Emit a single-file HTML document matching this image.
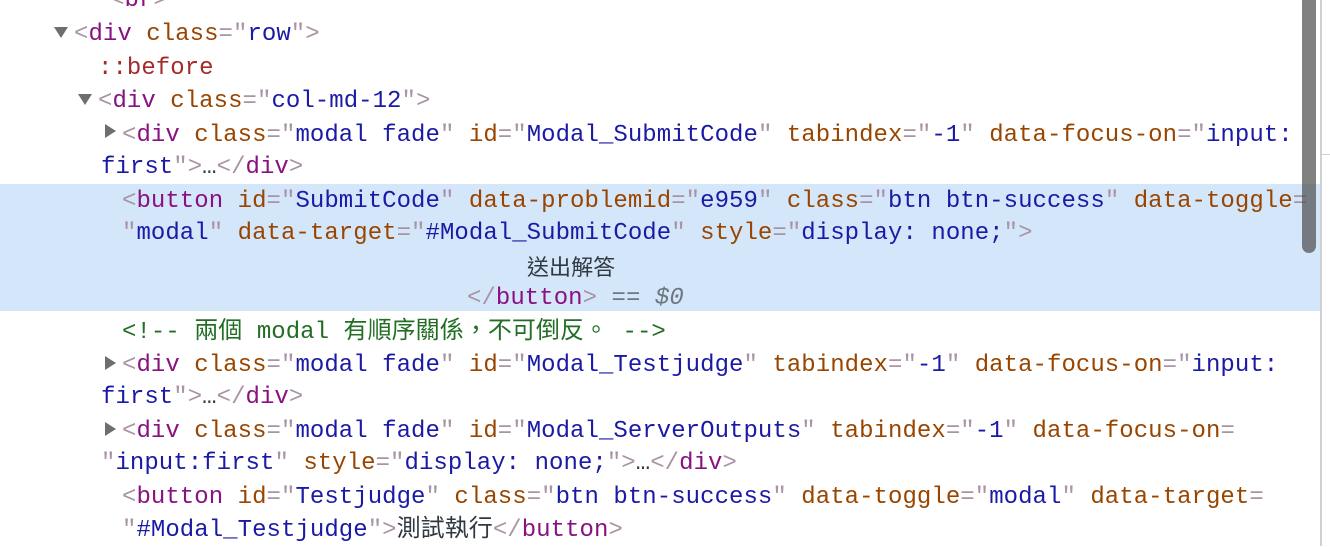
<!DOCTYPE html>
<html><head><meta charset="utf-8"><style>
body{margin:0;width:1330px;height:546px;overflow:hidden;background:#fff;position:relative;font-family:"Liberation Mono","Noto Sans CJK TC",monospace;font-size:24px;letter-spacing:0.05px}
.l{position:absolute;white-space:pre;height:33px;line-height:33px;margin-top:2px}
.t{color:#881280}.p{color:#a894a6}.a{color:#994500}.v{color:#1a1aa6}.c{color:#236e25}.x{color:#303942}.g{color:#6e7781}
.tri{position:absolute;width:0;height:0}
.down{border-left:7px solid transparent;border-right:7px solid transparent;border-top:11px solid #6e6e6e}
.right{border-top:7px solid transparent;border-bottom:7px solid transparent;border-left:11px solid #6e6e6e}
</style></head><body>
<div style="position:absolute;left:0;top:184px;width:1320px;height:127px;background:#d4e6f9"></div>
<div class="l" style="left:110px;top:-18px"><span class="p">&lt;</span><span class="t">br</span><span class="p">&gt;</span></div>
<div class="tri down" style="left:54px;top:27px"></div>
<div class="l" style="left:74px;top:16px"><span class="p">&lt;</span><span class="t">div</span> <span class="a">class</span><span class="p">="</span><span class="v">row</span><span class="p">"&gt;</span></div>
<div class="l" style="left:98px;top:50px;color:#a52a2a">::before</div>
<div class="tri down" style="left:78px;top:94px"></div>
<div class="l" style="left:98px;top:83px"><span class="p">&lt;</span><span class="t">div</span> <span class="a">class</span><span class="p">="</span><span class="v">col-md-12</span><span class="p">"&gt;</span></div>
<div class="tri right" style="left:105px;top:124px"></div>
<div class="l" style="left:122px;top:117px"><span class="p">&lt;</span><span class="t">div</span> <span class="a">class</span><span class="p">="</span><span class="v">modal fade</span><span class="p">"</span> <span class="a">id</span><span class="p">="</span><span class="v">Modal_SubmitCode</span><span class="p">"</span> <span class="a">tabindex</span><span class="p">="</span><span class="v">-1</span><span class="p">"</span> <span class="a">data-focus-on</span><span class="p">="</span><span class="v">input:</span></div>
<div class="l" style="left:101px;top:149px"><span class="v">first</span><span class="p">"&gt;</span><span class="x">…</span><span class="p">&lt;/</span><span class="t">div</span><span class="p">&gt;</span></div>
<div class="l" style="left:122px;top:183px"><span class="p">&lt;</span><span class="t">button</span> <span class="a">id</span><span class="p">="</span><span class="v">SubmitCode</span><span class="p">"</span> <span class="a">data-problemid</span><span class="p">="</span><span class="v">e959</span><span class="p">"</span> <span class="a">class</span><span class="p">="</span><span class="v">btn btn-success</span><span class="p">"</span> <span class="a">data-toggle</span><span class="p">=</span></div>
<div class="l" style="left:122px;top:215px"><span class="p">"</span><span class="v">modal</span><span class="p">"</span> <span class="a">data-target</span><span class="p">="</span><span class="v">#Modal_SubmitCode</span><span class="p">"</span> <span class="a">style</span><span class="p">="</span><span class="v">display: none;</span><span class="p">"&gt;</span></div>
<div class="l x" style="left:527px;top:248px;font-family:'Noto Sans CJK TC',sans-serif;font-size:22px">送出解答</div>
<div class="l" style="left:467px;top:280px"><span class="p">&lt;/</span><span class="t">button</span><span class="p">&gt;</span> <span class="g">==</span> <i class="g">$0</i></div>
<div class="l c" style="left:122px;top:314px">&lt;!-- 兩個 modal 有順序關係，不可倒反。 --&gt;</div>
<div class="tri right" style="left:105px;top:356px"></div>
<div class="l" style="left:122px;top:347px"><span class="p">&lt;</span><span class="t">div</span> <span class="a">class</span><span class="p">="</span><span class="v">modal fade</span><span class="p">"</span> <span class="a">id</span><span class="p">="</span><span class="v">Modal_Testjudge</span><span class="p">"</span> <span class="a">tabindex</span><span class="p">="</span><span class="v">-1</span><span class="p">"</span> <span class="a">data-focus-on</span><span class="p">="</span><span class="v">input:</span></div>
<div class="l" style="left:101px;top:379px"><span class="v">first</span><span class="p">"&gt;</span><span class="x">…</span><span class="p">&lt;/</span><span class="t">div</span><span class="p">&gt;</span></div>
<div class="tri right" style="left:105px;top:422px"></div>
<div class="l" style="left:122px;top:413px"><span class="p">&lt;</span><span class="t">div</span> <span class="a">class</span><span class="p">="</span><span class="v">modal fade</span><span class="p">"</span> <span class="a">id</span><span class="p">="</span><span class="v">Modal_ServerOutputs</span><span class="p">"</span> <span class="a">tabindex</span><span class="p">="</span><span class="v">-1</span><span class="p">"</span> <span class="a">data-focus-on</span><span class="p">=</span></div>
<div class="l" style="left:101px;top:445px"><span class="p">"</span><span class="v">input:first</span><span class="p">"</span> <span class="a">style</span><span class="p">="</span><span class="v">display: none;</span><span class="p">"&gt;</span><span class="x">…</span><span class="p">&lt;/</span><span class="t">div</span><span class="p">&gt;</span></div>
<div class="l" style="left:122px;top:479px"><span class="p">&lt;</span><span class="t">button</span> <span class="a">id</span><span class="p">="</span><span class="v">Testjudge</span><span class="p">"</span> <span class="a">class</span><span class="p">="</span><span class="v">btn btn-success</span><span class="p">"</span> <span class="a">data-toggle</span><span class="p">="</span><span class="v">modal</span><span class="p">"</span> <span class="a">data-target</span><span class="p">=</span></div>
<div class="l" style="left:122px;top:512px"><span class="p">"</span><span class="v">#Modal_Testjudge</span><span class="p">"&gt;</span><span class="x">測試執行</span><span class="p">&lt;/</span><span class="t">button</span><span class="p">&gt;</span></div>
<div style="position:absolute;left:1302px;top:-10px;width:14px;height:263px;border-radius:7px;background:rgba(80,80,80,0.72)"></div>
<div style="position:absolute;left:1320px;top:0;width:2px;height:546px;background:#d0d0d0"></div>
<div style="position:absolute;left:1322px;top:154px;width:8px;height:1px;background:#d0d0d0"></div>
</body></html>
